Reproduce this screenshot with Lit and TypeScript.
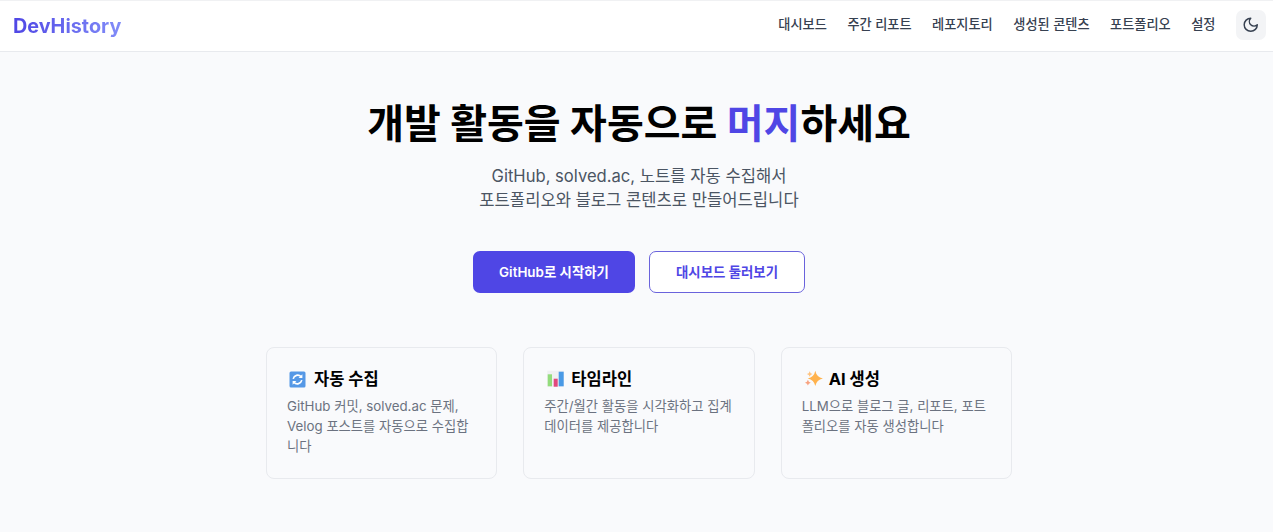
import { LitElement, html, css, svg } from "lit";
import { customElement } from "lit/decorators.js";

const NAV = ["대시보드", "주간 리포트", "레포지토리", "생성된 콘텐츠", "포트폴리오", "설정"];

const star = (cx: number, cy: number, r: number, fill: string) => {
  const k = r * 0.16;
  return svg`<path fill=${fill} d="M${cx} ${cy - r}Q${cx + k} ${cy - k} ${cx + r} ${cy}Q${cx + k} ${cy + k} ${cx} ${cy + r}Q${cx - k} ${cy + k} ${cx - r} ${cy}Q${cx - k} ${cy - k} ${cx} ${cy - r}Z"></path>`;
};

const ICONS = [
  svg`<rect x="-0.5" y="1.5" width="16" height="16" rx="1.5" fill="#5598e6"></rect>
    <path d="M3.2 8.8A4.6 4.6 0 0 1 11 6.6" fill="none" stroke="#fff" stroke-width="1.6"></path>
    <path d="M12.4 4.2V8H8.6Z" fill="#fff"></path>
    <path d="M11.8 10.2A4.6 4.6 0 0 1 4 12.4" fill="none" stroke="#fff" stroke-width="1.6"></path>
    <path d="M2.6 14.8V11H6.4Z" fill="#fff"></path>`,
  svg`<rect x="0.3" y="0.7" width="16.6" height="16" fill="#eff0f2"></rect>
    <rect x="0.7" y="4.3" width="4.3" height="12" fill="#93dc7c"></rect>
    <rect x="6.7" y="8.7" width="4" height="8" fill="#e2487e"></rect>
    <rect x="11.7" y="1.7" width="5" height="14.6" fill="#4a9ae6"></rect>`,
  svg`${star(10.3, 8.4, 7.6, "#ffb24d")}${star(4.7, 4, 2.8, "#ffc27e")}${star(2.9, 12.7, 2.9, "#f8a27f")}`,
];

const CARDS = [
  { title: "자동 수집", text: "GitHub 커밋, solved.ac 문제, Velog 포스트를 자동으로 수집합니다" },
  { title: "타임라인", text: "주간/월간 활동을 시각화하고 집계 데이터를 제공합니다" },
  { title: "AI 생성", text: "LLM으로 블로그 글, 리포트, 포트폴리오를 자동 생성합니다" },
];

@customElement("app-root")
export class AppRoot extends LitElement {
  static styles = css`
    :host {
      display: block;
      min-height: 532px;
      background: #f9fafc;
      font-family: Inter, "Noto Sans CJK KR", "Noto Sans", sans-serif;
      color: #000;
    }
    .nav {
      display: flex;
      align-items: center;
      justify-content: space-between;
      height: 50px;
      box-sizing: content-box;
      background: #fff;
      border-top: 1px solid #f0f1f3;
      border-bottom: 1px solid #e8eaee;
      padding: 0 7px 0 13px;
    }
    .logo {
      font-size: 19.8px;
      font-weight: 700;
      line-height: 24px;
      background: linear-gradient(90deg, #4f46e5, #818cf8);
      -webkit-background-clip: text;
      background-clip: text;
      color: transparent;
    }
    .links {
      display: flex;
      align-items: center;
      margin-bottom: 2px;
    }
    .links a {
      font-size: 13.2px;
      font-weight: 500;
      line-height: 16px;
      color: #374151;
      margin-right: 20.5px;
      margin-bottom: 2px;
      white-space: nowrap;
    }
    .theme {
      width: 30px;
      height: 30px;
      border-radius: 7px;
      background: #f3f4f6;
      display: flex;
      align-items: center;
      justify-content: center;
    }
    .theme svg {
      width: 17.5px;
      height: 17.5px;
      fill: none;
      stroke: #374151;
      stroke-width: 2;
      stroke-linecap: round;
      stroke-linejoin: round;
    }
    main {
      display: flex;
      flex-direction: column;
      align-items: center;
      padding: 0 0 0 5px;
    }
    h1 {
      margin: 42px 0 0;
      font-size: 40px;
      line-height: 60px;
      font-weight: 700;
      white-space: nowrap;
    }
    h1 span {
      color: #4f46e5;
    }
    .sub {
      margin: 10px 0 0;
      font-size: 16.6px;
      line-height: 24px;
      color: #4b5563;
      text-align: center;
    }
    .actions {
      display: flex;
      gap: 14px;
      margin-top: 39px;
    }
    .btn {
      box-sizing: border-box;
      height: 42px;
      padding-bottom: 2px;
      display: flex;
      align-items: center;
      justify-content: center;
      border-radius: 7px;
      font-size: 13.4px;
      font-weight: 600;
    }
    .primary {
      width: 162px;
      background: #4f46e5;
      color: #fff;
    }
    .secondary {
      width: 156px;
      background: #fff;
      color: #4f46e5;
      border: 1px solid #6a63dc;
    }
    .cards {
      display: grid;
      grid-template-columns: repeat(3, 231.3px);
      gap: 26px;
      margin-top: 54px;
    }
    .card {
      box-sizing: border-box;
      height: 132px;
      border: 1px solid #e8eaee;
      border-radius: 8px;
      padding: 20px 20px 19px;
    }
    .card h3 {
      display: flex;
      margin: 0;
      font-size: 16.5px;
      line-height: 22px;
      font-weight: 700;
      white-space: nowrap;
    }
    .emoji {
      flex: none;
      width: 18px;
      height: 18px;
      margin: 2px 6px 0 3px;
      overflow: visible;
    }
    .card p {
      margin: 6px 0 0;
      font-size: 13.3px;
      line-height: 20px;
      color: #6b7280;
    }
  `;

  render() {
    return html`
      <nav class="nav">
        <div class="logo">DevHistory</div>
        <div class="links">
          ${NAV.map((n) => html`<a>${n}</a>`)}
          <div class="theme">
            <svg viewBox="0 0 24 24"><path d="M12 3a6 6 0 0 0 9 9 9 9 0 1 1-9-9Z"></path></svg>
          </div>
        </div>
      </nav>
      <main>
        <h1>개발 활동을 자동으로 <span>머지</span>하세요</h1>
        <p class="sub">GitHub, solved.ac, 노트를 자동 수집해서<br />포트폴리오와 블로그 콘텐츠로 만들어드립니다</p>
        <div class="actions">
          <div class="btn primary">GitHub로 시작하기</div>
          <div class="btn secondary">대시보드 둘러보기</div>
        </div>
        <div class="cards">
          ${CARDS.map(
            (c, i) => html`<div class="card">
              <h3><svg class="emoji" viewBox="0 0 18 18">${ICONS[i]}</svg><span>${c.title}</span></h3>
              <p>${c.text}</p>
            </div>`
          )}
        </div>
      </main>
    `;
  }
}
